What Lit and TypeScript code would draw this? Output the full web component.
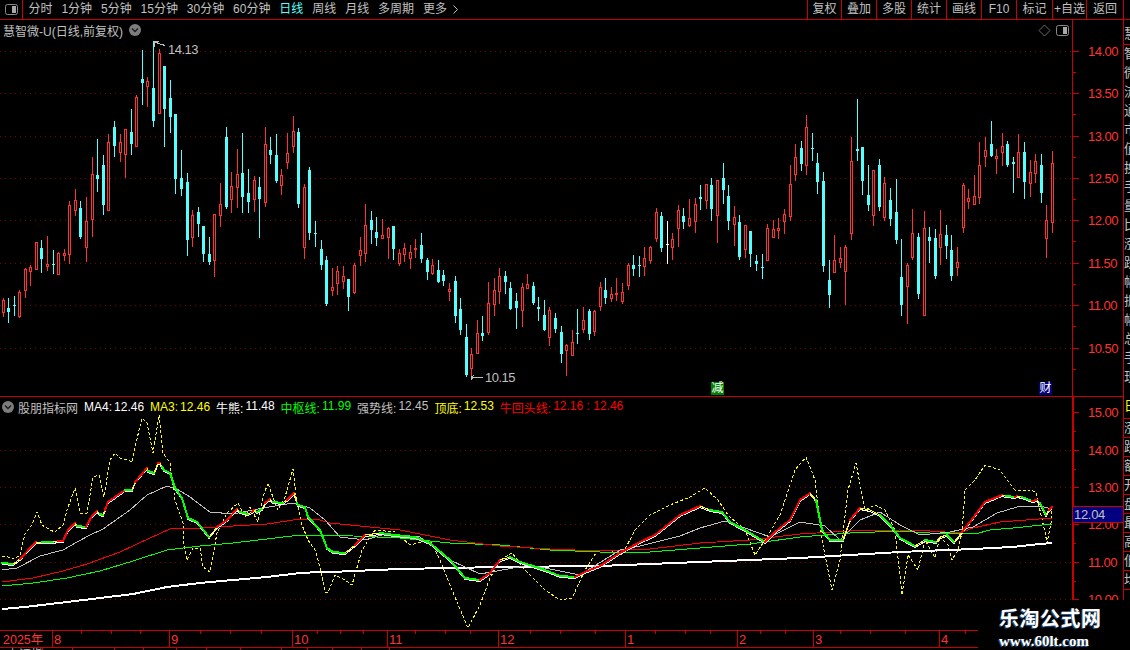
import { LitElement, html, css, svg } from 'lit';
import { customElement } from 'lit/decorators.js';

// candle rows: x, kind (0 red, 1 cyan, 2 white), high, body top, body bottom, low (all in page pixels)
type Candle = [number, number, number, number, number, number];
const CANDLES: Candle[] = [
  [3,0,298,300,312,316],[8,1,298,308,312,322],[14,1,296,305,306,315],[19,0,290,292,316,317],
  [25,0,268,269,290,297],[30,0,265,267,271,285],[36,0,242,242,269,269],[41,1,240,248,259,272],[47,0,236,264,266,270],
  [53,1,250,264,265,273],[58,0,252,253,274,274],[64,0,249,253,255,260],[69,0,201,205,254,263],[75,0,189,200,210,215],
  [80,1,201,208,237,238],[86,0,197,221,247,261],[92,0,157,174,219,236],[97,1,139,175,179,191],[103,1,155,165,205,214],
  [108,0,134,142,210,210],[114,1,121,127,146,156],[120,0,134,142,152,161],[125,0,129,129,154,177],[131,1,109,132,144,154],
  [136,0,95,97,146,146],[142,1,50,79,83,104],[147,0,77,81,86,106],[153,1,41,88,121,126],[159,0,49,53,113,113],
  [164,1,66,66,109,146],[170,1,80,98,117,132],[175,1,114,114,179,193],[181,1,150,178,189,195],[187,1,173,182,240,255],
  [192,0,210,215,237,246],[198,1,207,212,224,236],[203,1,226,226,254,261],[209,1,237,254,262,264],[214,0,214,214,260,276],
  [220,0,183,204,215,226],[226,1,127,137,207,208],[231,0,172,186,199,212],[237,0,149,174,187,207],
  [242,1,133,173,197,212],[248,1,169,193,202,212],[254,0,176,180,199,211],[259,1,177,187,199,237],[265,0,127,144,202,206],
  [270,1,137,150,155,163],[276,1,134,155,181,182],[281,0,169,175,185,194],[287,0,133,153,162,168],[293,0,116,131,146,152],
  [298,1,128,132,204,207],[304,0,184,187,247,258],[309,1,167,170,233,239],[315,1,221,233,234,246],[321,1,240,249,265,269],
  [326,1,256,260,304,305],[332,0,268,287,290,295],[337,0,266,271,283,294],[343,0,266,276,281,288],[348,1,279,279,297,310],
  [354,0,263,265,292,293],[360,0,237,250,255,265],[365,0,204,225,253,261],[371,1,211,220,230,243],[376,1,217,232,238,245],
  [382,0,219,235,238,238],[388,0,227,228,237,258],[393,1,226,226,249,259],[399,0,249,253,263,265],[404,0,243,248,254,261],
  [410,0,245,252,258,268],[415,0,239,248,249,257],[421,1,233,245,259,262],[427,1,258,260,272,279],[432,0,259,265,273,274],
  [438,1,260,270,282,282],[443,1,270,275,281,285],[449,0,283,289,291,300],[455,1,276,281,316,322],[460,1,298,309,330,334],
  [466,1,324,337,375,376],[471,0,348,354,368,376],[477,0,320,333,353,353],[482,1,316,333,336,340],[488,0,282,303,332,334],
  [494,0,278,290,304,315],[499,0,268,276,291,303],[505,1,271,276,282,293],[510,1,282,288,309,309],[516,1,293,301,308,328],
  [522,0,283,287,310,326],[527,0,274,284,288,288],[533,1,282,286,303,304],[538,1,297,307,309,320],[544,1,300,315,330,330],
  [549,0,307,310,337,345],[555,1,313,318,329,332],[561,1,326,332,354,362],[566,0,344,345,350,375],[572,0,330,342,355,355],
  [577,1,309,333,334,343],[583,0,307,320,329,332],[589,1,309,311,334,339],[594,0,310,311,331,335],[600,0,282,287,306,310],
  [605,1,278,290,298,303],[611,0,287,294,298,301],[616,0,278,293,294,300],[622,0,283,292,301,303],[628,0,263,265,285,289],
  [633,1,255,265,269,275],[639,1,256,265,266,276],[644,0,247,258,266,275],[650,0,246,247,260,263],[656,0,208,212,238,241],
  [661,1,212,216,248,251],[667,2,221,244,245,263],[672,0,233,239,247,259],[678,0,205,210,228,246],
  [683,1,208,216,222,228],[689,0,199,218,225,226],[695,0,198,204,221,232],[700,1,185,197,199,209],[706,0,184,184,200,208],
  [711,1,178,185,209,220],[717,0,180,180,215,242],[723,1,163,178,190,203],[728,1,185,196,221,229],[734,0,206,217,224,245],
  [739,1,215,222,257,259],[745,0,225,225,249,257],[750,1,231,231,254,266],[756,1,255,261,264,270],[762,1,254,267,268,278],
  [767,0,224,228,260,260],[773,0,220,229,237,237],[778,0,218,228,230,238],[784,0,209,214,221,233],[790,0,165,184,216,220],
  [795,0,144,157,174,180],[801,1,141,148,164,170],[806,0,115,127,165,174],[812,1,133,148,149,160],[817,1,153,163,182,193],
  [823,1,172,181,266,271],[829,1,260,280,295,307],[834,0,235,260,272,272],[840,0,247,258,262,267],[845,0,245,247,271,304],
  [851,0,137,161,233,239],[857,1,99,149,151,160],[862,1,147,147,181,194],[868,1,165,195,205,210],[873,0,170,170,215,225],
  [879,1,159,165,207,210],[884,0,177,183,217,220],[890,1,188,200,219,225],[896,1,179,212,240,243],[901,1,239,277,305,315],
  [907,0,263,265,286,323],[912,0,209,233,257,259],[918,1,233,237,294,298],[924,0,211,228,315,315],[929,1,227,237,241,262],
  [935,1,229,238,276,278],[940,0,210,234,247,264],[946,1,225,235,246,258],[951,1,235,250,276,280],[957,0,247,262,267,275],
  [963,0,183,185,227,232],[968,0,189,198,201,208],[974,0,175,196,204,204],[979,0,142,165,197,203],[985,0,137,150,156,166],
  [991,1,121,144,156,156],[996,0,149,156,158,173],[1002,0,133,146,152,165],[1007,1,141,144,165,166],[1013,1,157,162,164,192],
  [1018,0,134,152,177,177],[1024,1,142,152,182,198],[1030,0,160,172,183,196],[1035,0,154,161,173,182],[1041,1,154,165,193,202],
  [1046,0,205,220,238,257],[1052,0,151,163,222,232],
];

const P = (pts: number[][]) => pts.map((p) => `${p[0]},${p[1]}`).join(' ');

const WHITE_LINE = [[2,609],[25,607],[67,602],[100,598],[133,594],[167,587],[200,583],[233,580],[267,577],[300,573],[320,572],[330,572],[400,569],[500,567],[600,566],[700,562],[800,558],[900,552],[947,550],[975,549],[992,548],[1013,547],[1030,545],[1052,543]];
const RED_LINE = [[2,582],[33,578],[63,571],[87,564],[120,552],[150,538],[170,529],[200,528],[233,526],[267,524],[300,519],[320,520],[330,523],[360,526],[400,530],[450,540],[500,546],[550,549],[600,551],[650,549],[700,543],[750,540],[800,534],[850,531],[900,530],[930,531],[960,533],[973,528],[1000,522],[1013,521],[1052,518]];
const GREEN_LINE = [[2,586],[33,583],[67,578],[100,571],[133,561],[167,550],[200,546],[233,543],[267,539],[300,535],[330,535],[400,538],[450,543],[500,545],[550,550],[600,552],[650,552],[700,548],[750,544],[800,537],[850,533],[900,531],[930,533],[975,534],[990,530],[1013,528],[1052,524]];
const GRAY_LINE = [[2,570],[17,568],[40,556],[63,550],[77,542],[90,535],[103,529],[130,510],[147,495],[167,486],[177,489],[190,497],[210,512],[233,514],[263,508],[293,503],[310,508],[325,520],[340,537],[365,540],[385,534],[420,537],[450,560],[480,574],[530,565],[580,575],[620,550],[640,546],[680,536],[700,528],[725,521],[745,528],[770,537],[800,522],[825,526],[840,540],[860,520],[880,512],[900,525],[920,535],[950,532],[973,527],[997,513],[1017,507],[1040,506],[1052,509]];
const YELLOW_LINE = [[2,556],[8,557],[14,559],[20,555],[25,534],[32,525],[37,512],[42,525],[50,530],[55,532],[63,525],[67,510],[75,488],[80,513],[87,513],[93,477],[99,475],[104,497],[110,460],[115,453],[120,458],[128,460],[132,462],[135,447],[142,418],[147,423],[153,453],[159,415],[163,453],[170,463],[175,500],[183,523],[183,540],[187,560],[193,548],[200,548],[203,567],[210,572],[217,533],[227,513],[238,503],[245,517],[250,507],[258,522],[263,497],[268,483],[275,503],[278,510],[285,497],[293,469],[297,503],[302,525],[308,540],[315,550],[320,567],[325,592],[328,593],[335,575],[345,580],[352,585],[362,550],[375,530],[395,532],[410,545],[430,540],[440,560],[452,590],[468,628],[480,605],[490,578],[500,560],[512,553],[525,570],[545,590],[560,600],[572,598],[585,570],[598,550],[610,550],[622,555],[635,530],[650,515],[670,505],[690,497],[705,488],[718,500],[728,515],[745,530],[755,555],[765,540],[780,515],[795,470],[806,457],[815,480],[822,540],[832,590],[840,560],[848,490],[856,463],[865,510],[875,505],[885,510],[895,530],[902,595],[908,555],[918,570],[925,540],[935,558],[940,537],[948,545],[952,560],[958,550],[962,532],[965,490],[975,480],[985,465],[1000,470],[1015,490],[1030,490],[1036,492],[1041,515],[1045,532],[1047,543],[1051,523],[1052,510]];

// thick line: the third value is the colour of the stretch that ends at this point
const MAIN: [number, number, string][] = [
  [2,563,'y'],[13,564,'g'],[20,559,'y'],[33,545,'r'],[36,542,'r'],[42,542,'y'],[53,542,'g'],[58,541,'y'],[63,541,'r'],[68,530,'r'],[75,523,'r'],[77,526,'y'],[86,527,'g'],[92,516,'r'],[97,511,'r'],[100,514,'y'],[103,515,'g'],[105,510,'y'],[108,502,'r'],[125,490,'r'],[132,490,'g'],[135,482,'y'],[147,468,'r'],[148,471,'y'],[154,473,'g'],[158,463,'y'],[160,463,'r'],[162,467,'y'],[164,470,'g'],[170,473,'g'],[175,488,'g'],[182,498,'g'],[188,518,'g'],[197,522,'g'],[209,537,'g'],[213,532,'y'],[217,527,'y'],[227,520,'r'],[237,509,'r'],[240,512,'y'],[248,514,'g'],[252,512,'y'],[254,510,'r'],[257,512,'y'],[262,509,'g'],[265,503,'y'],[270,499,'r'],[273,502,'y'],[283,503,'g'],[287,500,'y'],[294,493,'r'],[297,503,'y'],[298,505,'g'],[305,507,'g'],[308,517,'g'],[320,530,'g'],[327,548,'g'],[333,552,'g'],[345,553,'g'],[355,545,'y'],[365,535,'r'],[380,533,'y'],[395,535,'g'],[415,537,'g'],[430,543,'g'],[450,560,'g'],[465,578,'g'],[480,580,'g'],[490,573,'r'],[500,560,'r'],[510,557,'y'],[520,562,'g'],[530,565,'g'],[545,570,'g'],[560,576,'g'],[575,577,'g'],[585,572,'r'],[600,566,'r'],[620,553,'r'],[640,542,'r'],[655,535,'r'],[680,515,'r'],[700,506,'r'],[710,510,'y'],[722,512,'g'],[730,522,'g'],[745,530,'g'],[765,542,'g'],[775,532,'r'],[790,520,'r'],[800,500,'r'],[810,493,'r'],[816,500,'y'],[822,530,'g'],[830,540,'g'],[843,540,'g'],[850,520,'y'],[860,508,'r'],[870,510,'y'],[880,515,'y'],[890,525,'g'],[900,538,'g'],[915,546,'g'],[925,540,'y'],[930,541,'g'],[936,542,'g'],[940,537,'y'],[947,535,'y'],[954,542,'g'],[962,532,'y'],[973,518,'r'],[985,502,'r'],[1002,495,'r'],[1006,496,'y'],[1015,497,'g'],[1017,496,'r'],[1022,497,'y'],[1032,501,'g'],[1037,500,'r'],[1040,503,'y'],[1046,515,'g'],[1049,510,'y'],[1052,507,'r'],
];

const UPPER_GRID = [51, 93, 136, 178, 220, 263, 305, 348];
const UPPER_LABELS = ['14.00', '13.50', '13.00', '12.50', '12.00', '11.50', '11.00', '10.50'];
const LOWER_GRID = [450, 487, 524, 562, 599];
const LOWER_TICKS = [412, 450, 487, 524, 562, 599];
const LOWER_LABELS = ['15.00', '14.00', '13.00', '12.00', '11.00', '10.00'];

const MONTHS: [number, string][] = [[52,'8'],[169,'9'],[292,'10'],[387,'11'],[498,'12'],[625,'1'],[737,'2'],[813,'3'],[939,'4']];
const MONTH_TICKS = [81,111,140,200,230,261,317,340,363,415,445,470,530,560,595,655,685,710,760,785,840,870,905,965];

const STATUS_CELLS: [number, string][] = [[43,'上证指数'],[30,''],[42,''],[29,''],[33,''],[30,''],[34,''],[41,''],[26,''],[25,''],[29,''],[28,'']];

const TABS = ['分时', '1分钟', '5分钟', '15分钟', '30分钟', '60分钟', '日线', '周线', '月线', '多周期'];
const BUTTONS = ['复权', '叠加', '多股', '统计', '画线', 'F10', '标记', '+自选', '返回'];
const SIDE_TOP = '慧智微流通市值换手量比涨跌幅振幅总手现'.split('');
const SIDE_BOTTOM = '日涨跌额开盘最高低均'.split('');

const LEGEND: [string, string, string][] = [
  ['MA4:', '12.46', 'white'],
  ['MA3:', '12.46', 'yellow'],
  ['牛熊:', '11.48', 'white'],
  ['中枢线:', '11.99', 'green'],
  ['强势线:', '12.45', 'gray'],
  ['顶底:', '12.53', 'yellow'],
  ['牛回头线:', '12.16 : 12.46', 'red'],
];

const panelIcon = () => html`<svg class="panel-icon" width="13" height="11" viewBox="0 0 13 11">
  <rect x="0.5" y="0.5" width="12" height="10" rx="2" fill="none" stroke="#8a8a8a"></rect>
  <rect x="7" y="2" width="4" height="7" fill="#a8a8a8"></rect>
</svg>`;

const roundIcon = () => html`<svg class="round-icon" width="12" height="12" viewBox="0 0 12 12">
  <circle cx="6" cy="6" r="6" fill="#7d7d7d"></circle>
  <path d="M3 4.5 L6 7.5 L9 4.5" fill="none" stroke="#1c1c1c" stroke-width="1.4"></path>
</svg>`;

@customElement('app-root')
export class AppRoot extends LitElement {
  static styles = css`
    :host {
      display: block;
      position: relative;
      width: 1130px;
      height: 650px;
      overflow: hidden;
      background: #000;
      color: #c0c0c0;
      font-family: "Liberation Sans", "Noto Sans CJK SC", sans-serif;
      font-size: 12px;
    }
    .toolbar {
      display: flex;
      align-items: center;
      box-sizing: border-box;
      height: 20px;
      border-bottom: 1px solid #c80000;
    }
    .corner {
      display: flex;
      align-items: center;
      justify-content: center;
      box-sizing: border-box;
      width: 23px;
      height: 19px;
      border-right: 1px solid #c80000;
    }
    .panel-icon { display: block; }
    .tabs {
      display: flex;
      align-items: center;
      gap: 8.9px;
      padding-left: 5.5px;
      line-height: 19px;
    }
    .tab.active { color: #54ffff; }
    .more { display: flex; align-items: center; gap: 6px; }
    .buttons {
      display: grid;
      grid-template-columns: 34px 35px 35px 35px 35px 35px 36px 34px 37px;
      margin-left: auto;
      margin-right: 6px;
      height: 19px;
      border-right: 1px solid #c80000;
    }
    .btn {
      border-left: 1px solid #c80000;
      text-align: center;
      line-height: 19px;
      white-space: nowrap;
    }
    .body { display: flex; height: 630px; }
    .charts { width: 1123px; border-right: 1px solid #c80000; }
    .side { width: 6px; overflow: hidden; display: flex; flex-direction: column; }
    .side-top { padding-top: 5px; height: 372px; overflow: hidden; }
    .side-cell {
      width: 14px;
      height: 19px;
      font-size: 13px;
      line-height: 18px;
      box-sizing: border-box;
    }
    .side-top .side-cell:first-child { height: 20px; border-bottom: 1px solid #c80000; }
    .side-bottom .side-cell { border-bottom: 1px solid #c80000; }
    .side-bottom .side-cell:first-child { color: #ffff00; height: 22px; }
    .pane { position: relative; border-bottom: 1px solid #c80000; }
    .pane svg.plot { display: block; }
    .upper { height: 376px; }
    .lower { height: 233px; }
    .pane-head {
      position: absolute;
      left: 0;
      right: 0;
      top: 0;
      display: flex;
      align-items: center;
      height: 20px;
      padding-left: 2px;
      white-space: nowrap;
    }
    .round-icon { display: block; flex: none; }
    .title { margin-left: 4px; }
    .upper .title { margin-left: 0; margin-right: 6px; padding-left: 1px; }
    .corner-tools {
      position: absolute;
      top: 4px;
      left: 1038px;
      display: flex;
      align-items: center;
      gap: 5px;
    }
    .diamond { display: block; }
    .legend-item { display: flex; gap: 2px; margin-left: 6px; }
    .white { color: #ffffff; }
    .yellow { color: #ffff00; }
    .green { color: #00ff00; }
    .gray { color: #c0c0c0; }
    .red { color: #ff0000; }
    .signal {
      position: absolute;
      width: 13px;
      height: 13px;
      color: #fff;
      line-height: 13px;
      text-align: center;
    }
    .signal.cut { background: #008000; }
    .signal.cash { background: #000080; }
    .price-tag {
      position: absolute;
      left: 1073px;
      top: 109px;
      width: 50px;
      height: 17px;
      box-sizing: border-box;
      border-top: 1px solid #c80000;
      border-bottom: 1px solid #c80000;
      background: #000080;
      color: #c0c0c0;
      font-size: 13px;
      line-height: 15px;
      padding-left: 1px;
      letter-spacing: -0.3px;
    }
    .time-axis { display: block; border-bottom: 1px solid #c80000; }
    .status { display: flex; height: 3px; overflow: hidden; }
    .status-cell {
      box-sizing: border-box;
      border-right: 1px solid #c80000;
      height: 16px;
      color: #c0c0c0;
      padding-left: 7px;
      line-height: 14px;
      white-space: nowrap;
      overflow: hidden;
    }
    svg text {
      font-family: "Liberation Sans", "Noto Sans CJK SC", sans-serif;
    }
    .axis-text { fill: #ff3232; font-size: 13px; letter-spacing: -0.5px; }
    .mark-text { fill: #c0c0c0; font-size: 13px; letter-spacing: -0.5px; }
    .month { fill: #ff3232; font-size: 13px; }
    .year { fill: #ff3232; font-size: 12.5px; }
    .frame { fill: #c80000; }
    .grid { stroke: #800000; stroke-width: 1; stroke-dasharray: 1 4; fill: none; }
    .wick-0, .body-0 { stroke: #ff3232; }
    .wick-1 { stroke: #54ffff; }
    .wick-2 { stroke: #ffffff; }
    .body-0 { fill: #000; stroke-width: 1; }
    .body-1 { fill: #54ffff; }
    .body-2 { fill: #ffffff; }
    .mark { fill: none; stroke: #c0c0c0; stroke-width: 1; }
    .ln { fill: none; stroke-width: 1; }
    .ln-white { stroke: #fff; stroke-width: 2; }
    .ln-red { stroke: #ff0000; }
    .ln-green { stroke: #00ff00; }
    .ln-gray { stroke: #c0c0c0; }
    .ln-yellow { stroke: #ffff00; stroke-dasharray: 3 2; }
    .ln-under { stroke: #fff; }
    .seg { stroke-width: 2; stroke-linecap: square; }
    .seg-r { stroke: #ff0000; }
    .seg-g { stroke: #00ff00; }
    .seg-y { stroke: #ffff00; stroke-width: 1; }
    .watermark {
      position: absolute;
      left: 978px;
      top: 600px;
      width: 152px;
      height: 50px;
      box-sizing: border-box;
      background: #000;
      color: #fff;
      padding-left: 21px;
      font-weight: bold;
      white-space: nowrap;
      text-shadow: -1px 1px 1px #2a5f9e;
    }
    .wm-name { font-size: 20px; letter-spacing: 0.5px; line-height: 28px; margin-top: 5px; }
    .wm-url { font-family: "Liberation Serif", serif; font-size: 15px; line-height: 15px; margin-top: 1px; }
  `;

  private candle(c: Candle) {
    const [x, kind, high, top, bottom, low] = c;
    const wick = svg`<line class="wick-${kind}" x1=${x + 0.5} x2=${x + 0.5} y1=${high} y2=${low + 1}></line>`;
    if (kind === 0) {
      return svg`${wick}<rect class="body-0" x=${x - 0.5} y=${top + 0.5} width="2" height=${Math.max(bottom - top, 1)}></rect>`;
    }
    return svg`${wick}<rect class="body-${kind}" x=${x - 1} y=${top} width="3" height=${Math.max(bottom - top, 1)}></rect>`;
  }

  private upperChart() {
    return svg`<svg class="plot" width="1123" height="376" viewBox="0 20 1123 376" shape-rendering="crispEdges">
      ${UPPER_GRID.map((y) => svg`<line class="grid" x1="0" x2="1072" y1=${y + 0.5} y2=${y + 0.5}></line>`)}
      ${CANDLES.map((c) => this.candle(c))}
      <path class="mark" d="M165.5 45.5 L161.5 44.5 L158.5 43.5 L154.5 41.5 M154.5 41.5 H158.5 M154.5 41.5 V46.5"></path>
      <text class="mark-text" x="168" y="54">14.13</text>
      <path class="mark" d="M471.5 377.5 H483 M471.5 375.5 V379.5 M473.5 375.5 L471.5 377.5 L473.5 379.5"></path>
      <text class="mark-text" x="485" y="382">10.15</text>
      <rect class="frame" x="1072" y="20" width="1" height="376"></rect>
      ${UPPER_GRID.map((y, i) => svg`
        <rect class="frame" x="1073" y=${y} width="6" height="1"></rect>
        <rect class="frame" x="1073" y=${y + 21} width="3" height="1"></rect>
        <text class="axis-text" x="1088" y=${y + 5}>${UPPER_LABELS[i]}</text>`)}
    </svg>`;
  }

  private lowerChart() {
    return svg`<svg class="plot" width="1123" height="233" viewBox="0 397 1123 233" shape-rendering="crispEdges">
      ${LOWER_GRID.map((y) => svg`<line class="grid" x1="0" x2="1072" y1=${y + 0.5} y2=${y + 0.5}></line>`)}
      <polyline class="ln ln-yellow" points=${P(YELLOW_LINE)}></polyline>
      <polyline class="ln ln-white" points=${P(WHITE_LINE)}></polyline>
      <polyline class="ln ln-green" points=${P(GREEN_LINE)}></polyline>
      <polyline class="ln ln-red" points=${P(RED_LINE)}></polyline>
      <polyline class="ln ln-gray" points=${P(GRAY_LINE)}></polyline>
      <polyline class="ln ln-under" points=${P(MAIN.map((p) => [p[0], p[1] + 1.5]))}></polyline>
      ${MAIN.slice(1).map((p, i) => svg`<line class="seg seg-${p[2]}" x1=${MAIN[i][0]} y1=${MAIN[i][1]} x2=${p[0]} y2=${p[1]}></line>`)}
      <rect class="frame" x="1072" y="397" width="2" height="233"></rect>
      ${LOWER_TICKS.map((y, i) => svg`
        <rect class="frame" x="1074" y=${y} width="5" height="1"></rect>
        <rect class="frame" x="1074" y=${y + 19} width="2" height="1"></rect>
        <text class="axis-text" x="1088" y=${y + 5}>${LOWER_LABELS[i]}</text>`)}
    </svg>`;
  }

  private timeAxis() {
    return svg`<svg class="time-axis" width="1123" height="16" viewBox="0 630 1123 16" shape-rendering="crispEdges">
      <text class="year" x="3" y="643">2025年</text>
      ${MONTHS.map(([x, label]) => svg`
        <rect class="frame" x=${x} y="630" width="1" height="16"></rect>
        <text class="month" x=${x + 2} y="643">${label}</text>`)}
      ${MONTH_TICKS.map((x) => svg`<rect class="frame" x=${x} y="630" width="1" height="3"></rect>`)}
    </svg>`;
  }

  render() {
    return html`
      <div class="toolbar">
        <div class="corner">${panelIcon()}</div>
        <div class="tabs">
          ${TABS.map((t) => html`<span class="tab ${t === '日线' ? 'active' : ''}">${t}</span>`)}
          <span class="tab more">更多
            <svg width="5" height="9" viewBox="0 0 5 9"><path d="M0.5 0.5 L4.5 4.5 L0.5 8.5" fill="none" stroke="#c0c0c0"></path></svg>
          </span>
        </div>
        <div class="buttons">
          ${BUTTONS.map((b) => html`<div class="btn">${b}</div>`)}
        </div>
      </div>
      <div class="body">
        <div class="charts">
          <div class="pane upper">
            ${this.upperChart()}
            <div class="pane-head">
              <span class="title">慧智微-U(日线,前复权)</span>
              ${roundIcon()}
            </div>
            <div class="corner-tools">
              <svg class="diamond" width="13" height="13" viewBox="0 0 13 13"><path d="M6.5 1 L12 6.5 L6.5 12 L1 6.5 Z" fill="none" stroke="#6a6a6a"></path></svg>
              ${panelIcon()}
            </div>
            <span class="signal cut" style="left:711px;top:362px">减</span>
            <span class="signal cash" style="left:1039px;top:362px">财</span>
          </div>
          <div class="pane lower">
            ${this.lowerChart()}
            <div class="pane-head">
              ${roundIcon()}
              <span class="title">股朋指标网</span>
              ${LEGEND.map(([label, value, tone]) => html`
                <span class="legend-item ${tone}"><span>${label}</span><span>${value}</span></span>`)}
            </div>
            <div class="price-tag">12.04</div>
          </div>
          ${this.timeAxis()}
          <div class="status">
            ${STATUS_CELLS.map(([w, label]) => html`<div class="status-cell" style="width:${w}px">${label}</div>`)}
          </div>
        </div>
        <div class="side">
          <div class="side-top">${SIDE_TOP.map((c) => html`<div class="side-cell">${c}</div>`)}</div>
          <div class="side-bottom">${SIDE_BOTTOM.map((c) => html`<div class="side-cell">${c}</div>`)}</div>
        </div>
      </div>
      <div class="watermark">
        <div class="wm-name">乐淘公式网</div>
        <div class="wm-url">www.60lt.com</div>
      </div>
    `;
  }
}
